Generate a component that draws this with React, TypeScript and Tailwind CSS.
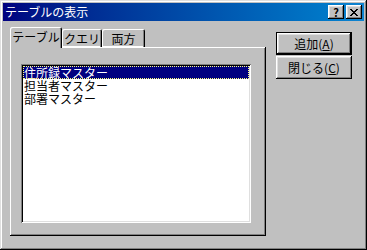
const raised =
  "shadow-[inset_-1px_-1px_#000,inset_1px_1px_#fff,inset_-2px_-2px_#808080,inset_2px_2px_#dfdfdf]";

function Btn({ label, k, def }: { label: string; k: string; def?: boolean }) {
  return (
    <div
      className={[
        "h-[23px] w-[76px] bg-[#c0c0c0] flex items-center justify-center text-[12px] leading-none text-black",
        def
          ? "shadow-[inset_0_0_0_1px_#000,inset_-2px_-2px_#000,inset_2px_2px_#fff,inset_-3px_-3px_#808080,inset_3px_3px_#dfdfdf]"
          : raised,
      ].join(" ")}
    >
      <span>
        {label}(<span className="underline underline-offset-1">{k}</span>)
      </span>
    </div>
  );
}

export default function App() {
  const items = ["住所録マスター", "担当者マスター", "部署マスター"];

  return (
    <div className="w-[367px] h-[250px] bg-[#c0c0c0] p-[3px] flex flex-col font-['Noto_Sans_CJK_JP',sans-serif] shadow-[inset_-1px_-1px_#000,inset_1px_1px_#dfdfdf,inset_-2px_-2px_#808080,inset_2px_2px_#fff]">
      {/* title bar */}
      <div className="h-[18px] shrink-0 flex items-center justify-between pl-[2px] pr-[2px] bg-gradient-to-r from-[#000080] to-[#1084d0]">
        <span className="text-white text-[12px] leading-none">テーブルの表示</span>
        <div className="flex gap-[2px]">
          <div className={`w-[16px] h-[14px] bg-[#c0c0c0] flex items-center justify-center text-[11px] font-bold leading-none text-black ${raised}`}>
            ?
          </div>
          <div className={`w-[16px] h-[14px] bg-[#c0c0c0] flex items-center justify-center ${raised}`}>
            <svg width="8" height="7" viewBox="0 0 8 7">
              <path d="M0 0h2v1h1v1h2v-1h1v-1h2v1h-1v1h-1v1h-1v1h1v1h1v1h1v1h-2v-1h-1v-1h-2v1h-1v1h-2v-1h1v-1h1v-1h1v-1h-1v-1h-1v-1h-1z" fill="#000" />
            </svg>
          </div>
        </div>
      </div>

      {/* body */}
      <div className="flex-1 flex pt-[6px] pl-[7px] pr-[12px] pb-[11px] gap-[10px]">
        {/* tab control */}
        <div className="w-[256px] flex flex-col">
          <div className="h-[20px] flex items-end text-[12px] leading-none text-black relative z-10">
            <div className="h-[21px] -mb-[1px] w-[52px] bg-[#c0c0c0] rounded-t-[2px] flex items-center justify-center pb-[1px] shadow-[inset_1px_1px_#fff,inset_-1px_0_#000,inset_-2px_0_#808080]">
              テーブル
            </div>
            <div className="h-[18px] w-[40px] bg-[#c0c0c0] rounded-t-[2px] flex items-center justify-center pt-[1px] shadow-[inset_1px_1px_#fff,inset_-1px_0_#000,inset_-2px_0_#808080,inset_0_-1px_#fff]">
              クエリ
            </div>
            <div className="h-[18px] w-[43px] bg-[#c0c0c0] rounded-t-[2px] flex items-center justify-center pt-[1px] shadow-[inset_1px_1px_#fff,inset_-1px_0_#000,inset_-2px_0_#808080,inset_0_-1px_#fff]">
              両方
            </div>
          </div>
          <div className="flex-1 pt-[17px] pl-[11px] pr-[15px] pb-[13px] shadow-[inset_-1px_-1px_#000,inset_1px_1px_#fff,inset_-2px_-2px_#808080]">
            <div className="h-full bg-white p-[2px] shadow-[inset_1px_1px_#808080,inset_-1px_-1px_#fff,inset_2px_2px_#000,inset_-2px_-2px_#dfdfdf]">
              {items.map((t, i) => (
                <div
                  key={t}
                  className={[
                    "h-[13px] text-[12px] leading-[13px] pl-[1px] whitespace-nowrap",
                    i === 0
                      ? "bg-[#000080] text-white outline-1 outline-dotted outline-[#ffff80] -outline-offset-1"
                      : "text-black",
                  ].join(" ")}
                >
                  {t}
                </div>
              ))}
            </div>
          </div>
        </div>

        {/* buttons */}
        <div className="flex flex-col gap-[1px] pt-[5px]">
          <Btn label="追加" k="A" def />
          <Btn label="閉じる" k="C" />
        </div>
      </div>
    </div>
  );
}
